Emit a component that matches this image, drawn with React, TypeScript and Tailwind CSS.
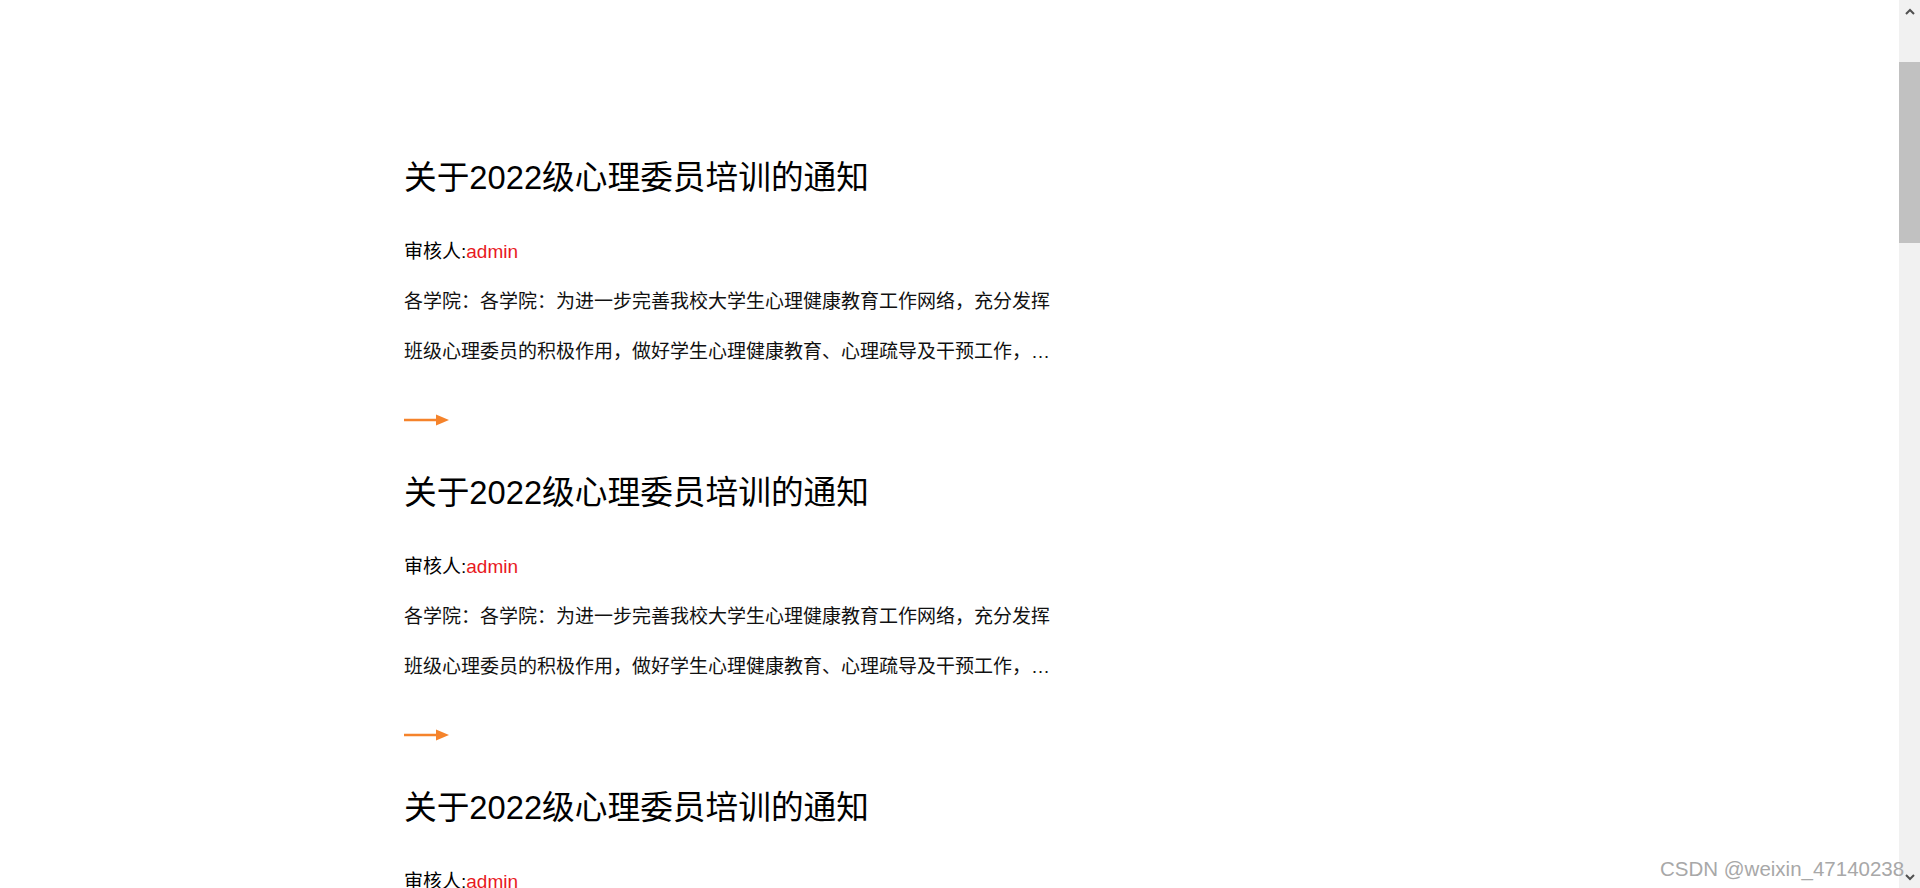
import React from "react";

const FONT = '"Liberation Sans", "Noto Sans CJK SC", sans-serif';

const TEXT =
  "各学院：各学院：为进一步完善我校大学生心理健康教育工作网络，充分发挥班级心理委员的积极作用，做好学生心理健康教育、心理疏导及干预工作，现将有关事项通知如下：";

function Arrow() {
  return (
    <svg width="46" height="14" viewBox="0 0 46 14" className="block">
      <line x1="0" y1="7" x2="36" y2="7" stroke="#f5832b" strokeWidth="2.6" />
      <path d="M32 1.5 L45 7 L32 12.5 Z" fill="#f5832b" />
    </svg>
  );
}

function Notice() {
  return (
    <div className="flex flex-col items-start">
      <h2 className="text-[32.7px] leading-[48px] text-black font-normal whitespace-nowrap">
        关于2022级心理委员培训的通知
      </h2>
      <div className="mt-[35px] text-[19px] leading-[30px] text-black whitespace-nowrap">
        审核人:<span className="text-[#e8191e]">admin</span>
      </div>
      <p className="mt-[10px] w-[652px] text-[19px] leading-[50px] text-[#111] line-clamp-2">
        {TEXT}
      </p>
      <div className="mt-[36px]">
        <Arrow />
      </div>
      <div className="h-[42px]" />
    </div>
  );
}

export default function App() {
  return (
    <div
      className="relative w-[1920px] h-[888px] overflow-hidden bg-white flex"
      style={{ fontFamily: FONT }}
    >
      <div className="flex-1 flex flex-col">
        <div className="h-px bg-white" />
        <div className="h-px bg-[#cfcfcf]" />
        <div className="pl-[404px] pt-[154px] flex flex-col">
          <Notice />
          <Notice />
          <Notice />
        </div>
      </div>
      <div className="w-[21px] h-full bg-[#f1f1f1] flex flex-col items-center">
        <div className="h-[22px] w-full flex items-center justify-center">
          <svg width="10" height="7" viewBox="0 0 10 7">
            <path d="M1 6 L5 2 L9 6" stroke="#505050" strokeWidth="2" fill="none" />
          </svg>
        </div>
        <div className="mt-[40px] w-full h-[181px] bg-[#c1c1c1]" />
        <div className="flex-1" />
        <div className="h-[22px] w-full flex items-center justify-center">
          <svg width="10" height="7" viewBox="0 0 10 7">
            <path d="M1 1 L5 5 L9 1" stroke="#505050" strokeWidth="2" fill="none" />
          </svg>
        </div>
      </div>
      <div
        className="absolute left-[1660px] top-[857px] text-[20.5px] leading-[24px] text-[#a8a8a8] whitespace-nowrap"
        style={{ fontFamily: '"Liberation Sans", Arial, sans-serif' }}
      >
        CSDN @weixin_47140238
      </div>
    </div>
  );
}
